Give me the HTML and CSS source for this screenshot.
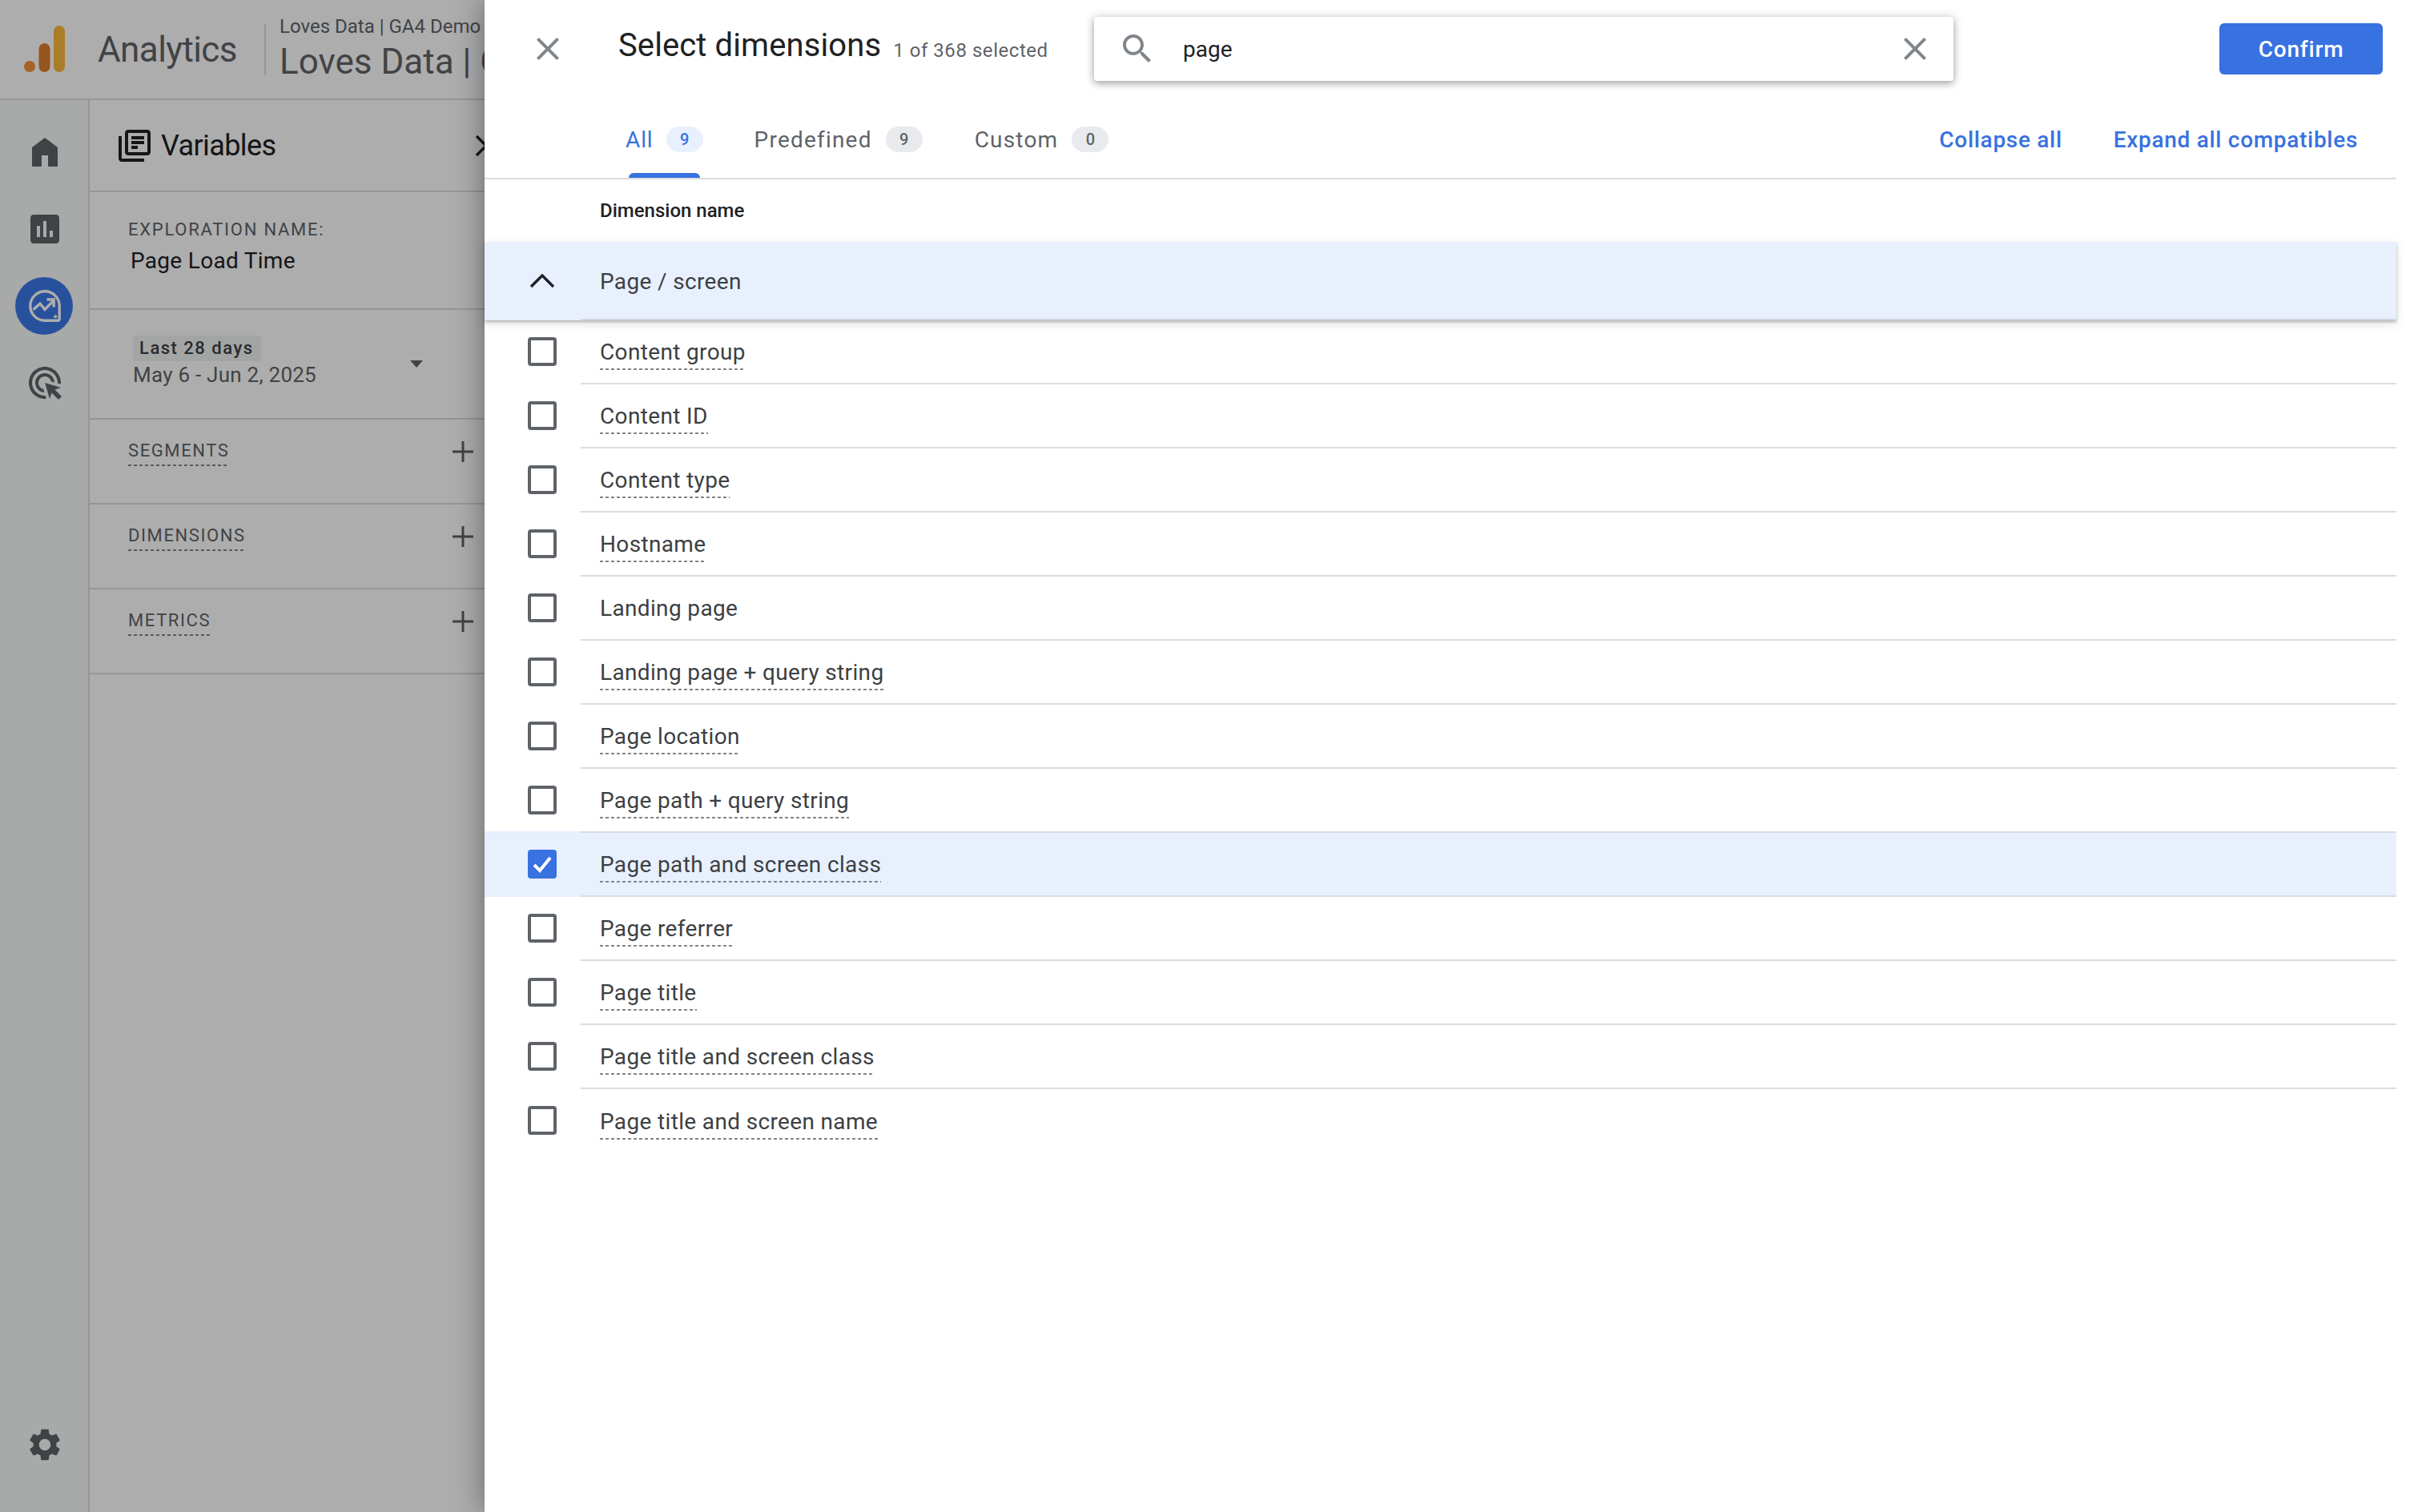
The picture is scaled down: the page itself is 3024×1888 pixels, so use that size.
FILE: index.html
```html
<!DOCTYPE html>
<html lang="en">
<head>
<meta charset="utf-8">
<title>Select dimensions</title>
<link rel="stylesheet" href="styles.css">
</head>
<body>
<div class="app">
  <header class="topnav">
    <svg class="ga-logo" viewBox="0 0 51 58" width="51" height="58"><rect class="ga-light" x="37" y="0" width="14" height="58" rx="7"/><rect class="ga-mid" x="18.5" y="22" width="14" height="36" rx="7"/><circle class="ga-dot" cx="7" cy="51" r="7"/></svg>
    <span class="product">Analytics</span>
    <div class="account">
      <div class="account-small">Loves Data | GA4 Demo</div>
      <div class="account-large">Loves Data | GA4 Demo</div>
    </div>
  </header>
  <div class="workspace">
    <nav class="rail">
      <div class="rail-item"><svg class="icon-48 ink" viewBox="0 0 24 24"><path d="M4 21V9l8-6 8 6v12h-6v-7h-4v7z"/></svg></div>
      <div class="rail-item"><svg class="icon-48 ink" viewBox="0 0 24 24"><path d="M19 3H5c-1.1 0-2 .9-2 2v14c0 1.1.9 2 2 2h14c1.1 0 2-.9 2-2V5c0-1.1-.9-2-2-2zM9 17H7v-7h2v7zm4 0h-2V7h2v10zm4 0h-2v-4h2v4z"/></svg></div>
      <div class="rail-item">
        <div class="rail-active">
          <svg class="icon-48 explore" viewBox="0 0 24 24"><path class="explore-ring" d="M12 2.9a9.1 9.1 0 1 0 0 18.2h8.1a1 1 0 0 0 1-1V12A9.1 9.1 0 0 0 12 2.9z"/><path class="explore-ring" d="M4.8 14.3L9 10.6l3 3.6 5.3-5.4M13.2 8h4.4v4.7"/><circle class="explore-dot" cx="18.6" cy="18.6" r="1"/></svg>
        </div>
      </div>
      <div class="rail-item"><svg class="icon-48 ink" viewBox="0 0 24 24"><path d="M11.71,17.99C8.53,17.84,6,15.22,6,12c0-3.31,2.69-6,6-6c3.22,0,5.84,2.53,5.99,5.71l-2.1-0.63C15.48,9.31,13.89,8,12,8 c-2.21,0-4,1.79-4,4c0,1.89,1.31,3.48,3.08,3.89L11.71,17.99z M22,12c0,0.3-0.01,0.6-0.04,0.9l-1.97-0.59C20,12.21,20,12.1,20,12 c0-4.42-3.58-8-8-8s-8,3.58-8,8s3.58,8,8,8c0.1,0,0.21,0,0.31-0.01l0.59,1.97C12.6,21.99,12.3,22,12,22C6.48,22,2,17.52,2,12 C2,6.48,6.48,2,12,2S22,6.48,22,12z M18.23,16.26L22,15l-10-3l3,10l1.26-3.77l4.27,4.27l1.98-1.98L18.23,16.26z"/></svg></div>
      <div class="rail-settings"><svg class="icon-48 ink" viewBox="0 0 24 24"><path d="M19.14 12.94c.04-.3.06-.61.06-.94 0-.32-.02-.64-.07-.94l2.03-1.58c.18-.14.23-.41.12-.61l-1.92-3.32c-.12-.22-.37-.29-.59-.22l-2.39.96c-.5-.38-1.03-.7-1.62-.94l-.36-2.54c-.04-.24-.24-.41-.48-.41h-3.84c-.24 0-.43.17-.47.41l-.36 2.54c-.59.24-1.13.57-1.62.94l-2.39-.96c-.22-.08-.47 0-.59.22L2.74 8.87c-.12.21-.08.47.12.61l2.03 1.58c-.05.3-.09.63-.09.94s.02.64.07.94l-2.03 1.58c-.18.14-.23.41-.12.61l1.92 3.32c.12.22.37.29.59.22l2.39-.96c.5.38 1.03.7 1.62.94l.36 2.54c.05.24.24.41.48.41h3.84c.24 0 .44-.17.47-.41l.36-2.54c.59-.24 1.13-.56 1.62-.94l2.39.96c.22.08.47 0 .59-.22l1.92-3.32c.12-.22.07-.47-.12-.61l-2.01-1.58zM12 15.6c-1.98 0-3.6-1.62-3.6-3.6s1.62-3.6 3.6-3.6 3.6 1.62 3.6 3.6-1.62 3.6-3.6 3.6z"/></svg></div>
    </nav>
    <aside class="variables">
      <section class="var-head">
        <svg class="icon-48 dark" viewBox="0 0 24 24"><path d="M4 6H2v14c0 1.1.9 2 2 2h14v-2H4V6zm16-4H8c-1.1 0-2 .9-2 2v12c0 1.1.9 2 2 2h12c1.1 0 2-.9 2-2V4c0-1.1-.9-2-2-2zm0 14H8V4h12v12zM10 9h8v2h-8zm0 3h4v2h-4zm0-6h8v2h-8z"/></svg>
        <span class="var-title">Variables</span>
        <svg class="var-chevron" viewBox="0 0 18 28"><polyline points="2,2 14,14 2,26"/></svg>
      </section>
      <section class="var-name">
        <div class="caps">EXPLORATION NAME:</div>
        <div class="name-value">Page Load Time</div>
      </section>
      <section class="var-date">
        <div>
          <span class="date-chip">Last 28 days</span>
          <div class="date-range">May 6 - Jun 2, 2025</div>
        </div>
        <span class="caret"></span>
      </section>
      <section class="var-row"><span class="caps-link">SEGMENTS</span><svg class="plus" viewBox="0 0 26 26"><path d="M13 0v26M0 13h26"/></svg></section>
      <section class="var-row"><span class="caps-link">DIMENSIONS</span><svg class="plus" viewBox="0 0 26 26"><path d="M13 0v26M0 13h26"/></svg></section>
      <section class="var-row"><span class="caps-link">METRICS</span><svg class="plus" viewBox="0 0 26 26"><path d="M13 0v26M0 13h26"/></svg></section>
    </aside>
  </div>

  <div class="scrim"></div>

  <div class="dialog">
    <div class="dialog-top">
      <svg class="icon-48 grey close-btn" viewBox="0 0 24 24"><path d="M19 6.41L17.59 5 12 10.59 6.41 5 5 6.41 10.59 12 5 17.59 6.41 19 12 13.41 17.59 19 19 17.59 13.41 12z"/></svg>
      <div class="title-group">
        <h1 class="dialog-title">Select dimensions</h1>
        <span class="dialog-count">1 of 368 selected</span>
      </div>
      <div class="search">
        <svg class="icon-48 grey" viewBox="0 0 24 24"><path d="M15.5 14h-.79l-.28-.27C15.41 12.59 16 11.11 16 9.5 16 5.91 13.09 3 9.5 3S3 5.91 3 9.5 5.91 16 9.5 16c1.61 0 3.09-.59 4.23-1.57l.27.28v.79l5 4.99L20.49 19l-4.99-5zm-6 0C7.01 14 5 11.99 5 9.5S7.01 5 9.5 5 14 7.01 14 9.5 11.99 14 9.5 14z"/></svg>
        <span class="search-text">page</span>
        <svg class="icon-48 grey search-clear" viewBox="0 0 24 24"><path d="M19 6.41L17.59 5 12 10.59 6.41 5 5 6.41 10.59 12 5 17.59 6.41 19 12 13.41 17.59 19 19 17.59 13.41 12z"/></svg>
      </div>
      <button class="confirm">Confirm</button>
    </div>

    <div class="tabs">
      <div class="tab tab-active"><span class="tab-label">All</span><span class="badge">9</span></div>
      <div class="tab tab-second"><span class="tab-label">Predefined</span><span class="badge">9</span></div>
      <div class="tab tab-third"><span class="tab-label">Custom</span><span class="badge">0</span></div>
      <div class="tab-actions">
        <span class="link-action">Collapse all</span>
        <span class="link-action">Expand all compatibles</span>
      </div>
    </div>

    <div class="column-head">Dimension name</div>

    <div class="group-row">
      <svg class="group-chevron" viewBox="0 0 32 18"><polyline points="2,16 16,2 30,16"/></svg>
      <div class="group-cell">Page / screen</div>
    </div>

    <div class="rows">
      <div class="row"><span class="check"></span><div class="cell"><span class="dim">Content group</span></div></div>
      <div class="row"><span class="check"></span><div class="cell"><span class="dim">Content ID</span></div></div>
      <div class="row"><span class="check"></span><div class="cell"><span class="dim">Content type</span></div></div>
      <div class="row"><span class="check"></span><div class="cell"><span class="dim">Hostname</span></div></div>
      <div class="row"><span class="check"></span><div class="cell"><span class="dim dim-plain">Landing page</span></div></div>
      <div class="row"><span class="check"></span><div class="cell"><span class="dim">Landing page + query string</span></div></div>
      <div class="row"><span class="check"></span><div class="cell"><span class="dim">Page location</span></div></div>
      <div class="row"><span class="check"></span><div class="cell"><span class="dim">Page path + query string</span></div></div>
      <div class="row row-selected"><span class="check check-on"><svg viewBox="0 0 36 36"><polyline points="8,19 15,26 28,10"/></svg></span><div class="cell"><span class="dim">Page path and screen class</span></div></div>
      <div class="row"><span class="check"></span><div class="cell"><span class="dim">Page referrer</span></div></div>
      <div class="row"><span class="check"></span><div class="cell"><span class="dim">Page title</span></div></div>
      <div class="row"><span class="check"></span><div class="cell"><span class="dim">Page title and screen class</span></div></div>
      <div class="row row-last"><span class="check"></span><div class="cell"><span class="dim">Page title and screen name</span></div></div>
    </div>
  </div>
</div>
</body>
</html>
```

FILE: styles.css
```css
* { box-sizing: border-box; }
html, body { margin: 0; padding: 0; background: #fff; }
body { font-family: Roboto, "Liberation Sans", sans-serif; color: #202124; }

.app { position: relative; width: 3024px; height: 1888px; overflow: hidden; background: #fff; display: flex; flex-direction: column; }

/* ---------- page behind the scrim ---------- */
.topnav { height: 125px; flex: none; display: flex; align-items: center; border-bottom: 2px solid #dadce0; padding-left: 30px; }
.ga-logo { flex: none; margin-top: -2px; }
.ga-light { fill: #fbb83c; }
.ga-mid { fill: #dd7f2c; }
.ga-dot { fill: #f29236; }
.product { font-size: 44px; color: #5f6368; margin-left: 41px; width: 208px; letter-spacing: -0.6px; }
.account { border-left: 2px solid #dadce0; height: 64px; padding-left: 17px; display: flex; flex-direction: column; white-space: nowrap; }
.account-small { font-size: 24px; line-height: 24px; color: #5f6368; margin-top: -9px; }
.account-large { font-size: 44px; line-height: 58px; color: #5f6368; margin-top: 3px; }

.workspace { flex: 1; display: flex; min-height: 0; }
.rail { width: 112px; flex: none; background: #f8f9fa; border-right: 2px solid #dadce0; padding-top: 17px; display: flex; flex-direction: column; align-items: center; }
.rail-item { height: 96px; display: flex; align-items: center; justify-content: center; flex: none; }
.rail-active { width: 72px; height: 72px; border-radius: 50%; background: #3b78e7; display: flex; align-items: center; justify-content: center; }
.rail-settings { margin-top: auto; padding-bottom: 60px; }
.icon-48 { width: 48px; height: 48px; flex: none; display: block; }
.ink { fill: #5f6368; margin-left: 2px; }
.explore { margin-left: 2px; }
.dark { fill: #202124; }
.grey { fill: #80868b; }
.explore-ring { fill: none; stroke: #fff; stroke-width: 1.7; }
.explore-dot { fill: #fff; }

.variables { width: 560px; flex: none; display: flex; flex-direction: column; }
.variables section { border-bottom: 2px solid #dadce0; flex: none; }
.var-head { height: 115px; display: flex; align-items: center; padding-left: 32px; }
.var-title { font-size: 36px; margin-left: 9px; letter-spacing: -0.6px; color: #202124; }
.var-chevron { width: 18px; height: 28px; margin-left: 249px; fill: none; stroke: #202124; stroke-width: 3.4; flex: none; }
.var-name { height: 147px; padding: 33px 0 0 48px; }
.caps { font-size: 22px; line-height: 28px; letter-spacing: 1.75px; color: #5f6368; }
.name-value { font-size: 28px; line-height: 36px; height: 34px; overflow: hidden; margin-top: 7px; padding-left: 3px; color: #202124; letter-spacing: .3px; }
.var-date { height: 137px; padding: 32px 0 0 54px; display: flex; }
.date-chip { display: block; width: 160px; height: 32px; background: #f1f3f4; font-size: 22px; line-height: 32px; font-weight: 500; letter-spacing: 1.5px; color: #3c4043; padding-left: 8px; white-space: nowrap; }
.date-range { font-size: 26px; line-height: 34px; color: #5f6368; letter-spacing: .25px; white-space: nowrap; }
.caret { width: 0; height: 0; border: 8px solid transparent; border-top: 9px solid #5f6368; border-bottom: 0; margin: 31px 0 0 117px; flex: none; }
.var-row { height: 106px; padding: 22px 0 0 48px; display: flex; align-items: flex-start; position: relative; }
.caps-link { font-size: 22px; line-height: 33px; letter-spacing: 1.6px; color: #5f6368; padding-bottom: 3px; background: linear-gradient(to right, #80868b 55%, transparent 55%) left bottom / 7px 2px repeat-x; }
.var-row .plus { position: absolute; left: 453px; top: 27px; width: 26px; height: 26px; fill: none; stroke: #5f6368; stroke-width: 3; }

.scrim { position: absolute; inset: 0; background: rgba(0, 0, 0, .32); }

/* ---------- dialog ---------- */
.dialog { position: absolute; top: 0; right: 0; bottom: 0; left: 605px; background: #fff; box-shadow: 0 0 36px rgba(0, 0, 0, .42); }
.dialog-top { height: 122px; display: flex; align-items: center; padding-left: 55px; padding-right: 49px; }
.title-group { width: 594px; margin-left: 64px; display: flex; align-items: baseline; flex: none; white-space: nowrap; margin-top: -9px; }
.dialog-title { margin: 0; font-size: 40px; font-weight: 400; color: #202124; letter-spacing: .1px; }
.dialog-count { font-size: 24px; color: #5f6368; margin-left: 15px; letter-spacing: .55px; position: relative; top: 1px; }
.search { width: 1073px; height: 80px; border-radius: 4px; background: #fff; box-shadow: 0 3px 10px rgba(60, 64, 67, .45), 0 0 14px rgba(60, 64, 67, .12); display: flex; align-items: center; padding-left: 30px; flex: none; }
.search-text { font-size: 28px; color: #202124; margin-left: 33px; }
.search-clear { margin-left: auto; margin-right: 24px; }
.confirm { margin-left: auto; width: 204px; height: 64px; border: 0; border-radius: 6px; background: #3871e0; color: #fff; font: 500 28px Roboto, sans-serif; letter-spacing: .8px; padding: 0; }

.tabs { height: 102px; margin-right: 32px; border-bottom: 2px solid #dadce0; padding: 4px 48px 0 176px; display: flex; align-items: stretch; }
.tab { position: relative; display: flex; align-items: center; color: #5f6368; font-size: 28px; letter-spacing: 1.2px; }
.tab-label { margin-right: 17px; }
.tab-active .tab-label { margin-right: 16px; letter-spacing: .9px; }
.tab-second { margin-left: 64px; }
.tab-third { margin-left: 65px; }
.badge { width: 46px; height: 32px; border-radius: 16px; background: #e8eaed; color: #5f6368; font-size: 20px; line-height: 32px; text-align: center; letter-spacing: 0; font-weight: 500; }
.tab-active { color: #3871e0; }
.tab-active .badge { background: #e8f0fe; color: #3871e0; }
.tab-active::after { content: ""; position: absolute; left: 4px; right: 4px; bottom: 0; height: 6px; background: #3871e0; border-radius: 6px 6px 0 0; }
.tab-actions { margin-left: auto; display: flex; align-items: center; gap: 64px; }
.link-action { color: #3871e0; font-size: 28px; font-weight: 500; letter-spacing: .7px; }

.column-head { height: 78px; display: flex; align-items: center; padding-left: 144px; font-size: 24px; font-weight: 500; color: #202124; }

.group-row { position: relative; height: 98px; margin-right: 32px; background: #e8f0fe; display: flex; align-items: center; box-shadow: 0 2px 3px rgba(60, 64, 67, .3), 0 4px 10px 1px rgba(60, 64, 67, .14); }
.group-chevron { width: 32px; height: 18px; margin-left: 56px; margin-right: 32px; fill: none; stroke: #202124; stroke-width: 3.4; flex: none; }
.group-cell { flex: 1; height: 100%; display: flex; align-items: center; padding: 2px 0 0 24px; font-size: 28px; color: #3c4043; letter-spacing: .35px; border-bottom: 2px solid #d3d6dc; }

.rows { margin-right: 32px; }
.row { height: 80px; display: flex; align-items: center; }
.check { width: 36px; height: 36px; border: 4px solid #5f6368; border-radius: 4px; margin-left: 54px; margin-right: 30px; flex: none; margin-top: -2px; }
.check-on { background: #3871e0; border: 0; }
.check-on svg { display: block; width: 36px; height: 36px; fill: none; stroke: #fff; stroke-width: 4; }
.cell { flex: 1; height: 80px; border-bottom: 2px solid #dadce0; padding-left: 24px; display: flex; align-items: center; }
.row-last .cell { border-bottom: 0; }
.row-selected { background: #e8f0fe; box-shadow: 0 -2px 0 #e8f0fe; }
.dim { font-size: 28px; line-height: 36px; color: #3c4043; letter-spacing: .35px; padding: 6px 0 4px; background: linear-gradient(to right, #80868b 55%, transparent 55%) left bottom / 7px 2px repeat-x; white-space: nowrap; }
.dim-plain { background: none; }
```
